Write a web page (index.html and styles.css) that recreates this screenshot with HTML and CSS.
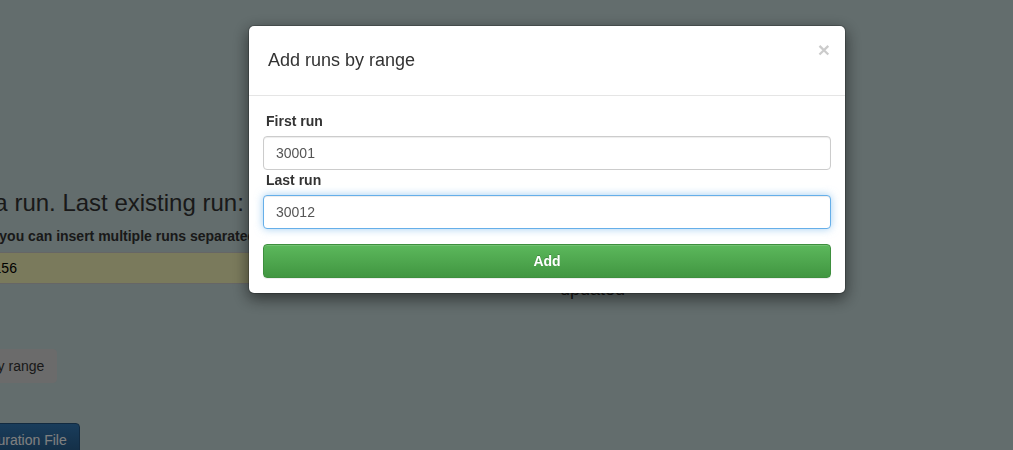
FILE: index.html
```html
<!DOCTYPE html>
<html lang="en">
<head>
<meta charset="utf-8">
<title>Add runs</title>
<link rel="stylesheet" href="styles.css">
</head>
<body>
<div class="page">
  <div class="main">
    <h3 class="page-title">Add a run. Last existing run: 30156</h3>
    <p class="hint">Notice: you can insert multiple runs separated by commas</p>
    <input class="run-input" type="text" value="30156">
    <button class="btn btn-default range-btn" type="button">Add by range</button>
    <button class="btn btn-primary upload-btn" type="button">Configuration File</button>
  </div>
  <div class="side">
    <div class="status">Run list<br>updated</div>
  </div>
</div>

<div class="backdrop"></div>

<div class="modal">
  <div class="modal-dialog">
    <div class="modal-content">
      <div class="modal-header">
        <h4 class="modal-title">Add runs by range</h4>
        <button class="close" type="button">&times;</button>
      </div>
      <div class="modal-body">
        <label class="field-label">First run</label>
        <input class="form-control" type="text" value="30001">
        <label class="field-label">Last run</label>
        <input class="form-control focused" type="text" value="30012">
        <button class="btn btn-success add-btn" type="button">Add</button>
      </div>
    </div>
  </div>
</div>
</body>
</html>
```

FILE: styles.css
```css
* { box-sizing: border-box; }

html, body {
  margin: 0;
  padding: 0;
  height: 100%;
  overflow: hidden;
}

body {
  background: #c6dada;
  font-family: "Liberation Sans", Arial, sans-serif;
  font-size: 14px;
  line-height: 20px;
  color: #333;
}

.page {
  display: grid;
  grid-template-columns: 500px 1fr;
  margin-left: -52px;
}

.main {
  display: flex;
  flex-direction: column;
  align-items: flex-start;
  padding-top: 190px;
}

.page-title {
  margin: 0 0 0 -3px;
  font-size: 24px;
  line-height: 26px;
  font-weight: normal;
  white-space: nowrap;
}

.hint {
  margin: 10px 0 0;
  font-weight: bold;
  white-space: nowrap;
}

.run-input {
  margin-top: 6px;
  margin-left: 17px;
  width: 480px;
  height: 32px;
  padding: 0 12px;
  border: 1px solid #ccc;
  border-radius: 0;
  background: #f4f4b8;
  font-family: inherit;
  font-size: 14px;
  color: #000;
}

.btn {
  display: inline-block;
  height: 34px;
  padding: 6px 12px;
  border: 1px solid transparent;
  border-radius: 4px;
  font-family: inherit;
  font-size: 14px;
  line-height: 20px;
  white-space: nowrap;
  cursor: pointer;
}

.btn-default {
  background: #d6d6d6;
  border-color: #d6d6d6;
  color: #333;
}

.range-btn { margin-top: 65px; }

.btn-primary {
  background: linear-gradient(to bottom, #337ab7 0, #265a88 100%);
  border-color: #245580;
  color: #fff;
}

.upload-btn {
  margin-top: 40px;
  margin-left: -4px;
}

.side {
  padding-top: 259px;
  padding-left: 112px;
}

.status {
  font-size: 18px;
  line-height: 20px;
  color: #333;
}

.backdrop {
  position: fixed;
  inset: 0;
  background: rgba(0, 0, 0, 0.5);
}

.modal {
  position: fixed;
  inset: 0;
}

.modal-dialog {
  width: 598px;
  margin: 25px 0 0 248px;
}

.modal-content {
  background: #fff;
  border: 1px solid rgba(0, 0, 0, 0.2);
  border-radius: 6px;
  box-shadow: 0 5px 15px rgba(0, 0, 0, 0.5);
  background-clip: padding-box;
}

.modal-header {
  position: relative;
  display: flex;
  align-items: center;
  height: 70px;
  padding: 0 19px;
  border-bottom: 1px solid #e5e5e5;
}

.modal-title {
  margin: 0 0 2px;
  font-size: 18px;
  line-height: 26px;
  font-weight: normal;
  color: #333;
}

.close {
  position: absolute;
  top: 13px;
  right: 15px;
  padding: 0;
  border: 0;
  background: none;
  font-family: inherit;
  font-size: 21px;
  font-weight: bold;
  line-height: 1;
  color: #000;
  opacity: 0.2;
  text-shadow: 0 1px 0 #fff;
  cursor: pointer;
}

.modal-body {
  display: flex;
  flex-direction: column;
  padding: 15px 14px;
}

.field-label {
  display: block;
  margin-bottom: 5px;
  padding-left: 3px;
  font-weight: bold;
  font-size: 14px;
  line-height: 20px;
  color: #333;
}

.form-control {
  display: block;
  width: 100%;
  height: 34px;
  padding: 6px 12px;
  border: 1px solid #ccc;
  border-radius: 4px;
  background: #fff;
  font-family: inherit;
  font-size: 14px;
  line-height: 20px;
  color: #555;
  box-shadow: inset 0 1px 1px rgba(0, 0, 0, 0.075);
  outline: none;
}

.form-control.focused {
  border-color: #66afe9;
  box-shadow: inset 0 1px 1px rgba(0, 0, 0, 0.075), 0 0 8px rgba(102, 175, 233, 0.6);
}

.btn-success {
  background: linear-gradient(to bottom, #5cb85c 0, #419641 100%);
  border-color: #3e8f3e;
  color: #fff;
  font-weight: bold;
  text-shadow: 0 -1px 0 rgba(0, 0, 0, 0.2);
  box-shadow: inset 0 1px 0 rgba(255, 255, 255, 0.15), 0 1px 1px rgba(0, 0, 0, 0.075);
}

.add-btn {
  width: 100%;
  margin-top: 15px;
}
```
